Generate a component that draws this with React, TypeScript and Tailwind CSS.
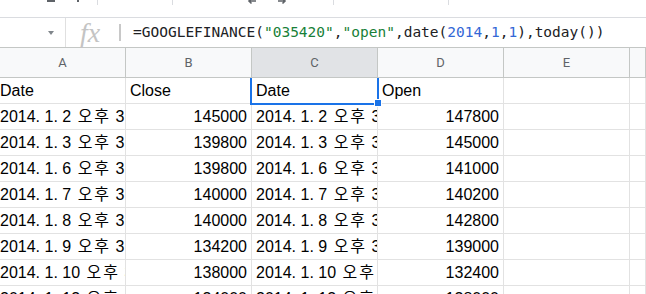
import React from 'react'

const cellFont = { fontFamily: '"Liberation Sans", Arial, "Noto Sans CJK KR", sans-serif' }

const rows: [string, string, string, string][] = [
  ['2014. 1. 2', '145000', '2014. 1. 2', '147800'],
  ['2014. 1. 3', '139800', '2014. 1. 3', '145000'],
  ['2014. 1. 6', '139800', '2014. 1. 6', '141000'],
  ['2014. 1. 7', '140000', '2014. 1. 7', '140200'],
  ['2014. 1. 8', '140000', '2014. 1. 8', '142800'],
  ['2014. 1. 9', '134200', '2014. 1. 9', '139000'],
  ['2014. 1. 10', '138000', '2014. 1. 10', '132400'],
  ['2014. 1. 13', '134000', '2014. 1. 13', '138000'],
]

// date cell like "2014. 1. 2 오후 3:30:00" — hangul a bit wider like the Windows font
function DateText({ day }: { day: string }) {
  return (
    <span>
      {day} <span className="ml-[2px] tracking-[2px]">오후</span> 3:30:00
    </span>
  )
}

function Toolbar() {
  return (
    <div className="flex h-[18px] items-start overflow-hidden border-b border-[#dadce0] bg-white">
      <div className="ml-[47px] h-[2px] w-[8px] bg-[#5f6368]" />
      <div className="ml-[22px] h-[2px] w-[2px] bg-[#5f6368]" />
      <div className="ml-[18px] h-[5px] w-px bg-[#dadce0]" />
      <div className="ml-[74px] h-[5px] w-px bg-[#dadce0]" />
      <svg className="ml-[74px] -mt-[3px]" width="10" height="8" viewBox="0 0 10 8">
        <path d="M9 4H2M4.5 1.5L2 4l2.5 2.5" stroke="#5f6368" strokeWidth="1.6" fill="none" />
      </svg>
      <svg className="ml-[20px] -mt-[3px]" width="10" height="8" viewBox="0 0 10 8">
        <path d="M1 4h7M5.5 1.5L8 4 5.5 6.5" stroke="#5f6368" strokeWidth="1.6" fill="none" />
      </svg>
      <div className="ml-[46px] h-[5px] w-px bg-[#dadce0]" />
      <div className="ml-[114px] h-[5px] w-px bg-[#dadce0]" />
    </div>
  )
}

function FormulaBar() {
  const mono = { fontFamily: '"DejaVu Sans Mono", "Liberation Mono", monospace' }
  return (
    <div className="flex h-[30px] items-center border-b border-[#c4c7c5] bg-white">
      <div className="flex h-full w-[66px] items-center justify-end border-r border-[#e0e0e0] pr-[11px]">
        <div className="h-0 w-0 border-x-[3.5px] border-t-[4px] border-x-transparent border-t-[#80868b]" />
      </div>
      <div
        className="ml-[14px] w-[26px] text-[28px] italic leading-none text-[#c4c4c4]"
        style={{ fontFamily: '"Liberation Serif", "DejaVu Serif", serif' }}
      >
        fx
      </div>
      <div className="ml-[13px] h-[17px] w-[2px] bg-[#c8c8c8]" />
      <div className="ml-[12px] whitespace-nowrap text-[14.5px] text-[#202124]" style={mono}>
        =GOOGLEFINANCE(<span className="text-[#188038]">"035420"</span>,
        <span className="text-[#188038]">"open"</span>,date(
        <span className="text-[#3367d6]">2014</span>,<span className="text-[#3367d6]">1</span>,
        <span className="text-[#3367d6]">1</span>),today())
      </div>
    </div>
  )
}

function ColumnHeaders() {
  const letters = ['A', 'B', 'C', 'D', 'E', '']
  return (
    <div
      className="grid h-[30px] grid-cols-[126px_126px_126px_126px_126px_1fr] border-b border-[#c4c7c5] bg-[#f8f9fa]"
      style={{ fontFamily: 'Roboto, Arial, sans-serif' }}
    >
      {letters.map((l, i) => (
        <div
          key={i}
          className={`flex items-center justify-center border-r border-[#c4c7c5] text-[13px] text-[#5f6368] ${
            l === 'C' ? 'bg-[#e1e3e6]' : ''
          }`}
        >
          {l}
        </div>
      ))}
    </div>
  )
}

function Cell({ children, align = 'left', first = false }: { children?: React.ReactNode; align?: 'left' | 'right'; first?: boolean }) {
  return (
    <div
      className={`flex h-[26px] items-end overflow-hidden whitespace-nowrap border-r border-b border-[#e2e2e2] pb-[3px] text-[16px] leading-[18px] text-black ${
        align === 'right' ? 'justify-end pr-[4px]' : first ? 'pl-0' : 'pl-[4px]'
      }`}
    >
      {children}
    </div>
  )
}

export default function App() {
  return (
    <div className="h-[294px] w-[646px] overflow-hidden bg-white">
      <Toolbar />
      <FormulaBar />
      <ColumnHeaders />
      <div className="grid grid-cols-[126px_126px_126px_126px_126px_1fr]" style={cellFont}>
        <Cell first>Date</Cell>
        <Cell>Close</Cell>
        <div className="relative">
          <Cell>Date</Cell>
          <div className="pointer-events-none absolute -left-[2px] -right-px top-0 -bottom-px border-x-2 border-b-2 border-[#1a73e8]" />
          <div className="absolute -right-[4px] -bottom-[3px] h-[8px] w-[8px] border border-white bg-[#1a73e8]" />
        </div>
        <Cell>Open</Cell>
        <Cell />
        <Cell />
        {rows.map((r, i) => (
          <React.Fragment key={i}>
            <Cell first>
              <DateText day={r[0]} />
            </Cell>
            <Cell align="right">{r[1]}</Cell>
            <Cell>
              <DateText day={r[2]} />
            </Cell>
            <Cell align="right">{r[3]}</Cell>
            <Cell />
            <Cell />
          </React.Fragment>
        ))}
      </div>
    </div>
  )
}
